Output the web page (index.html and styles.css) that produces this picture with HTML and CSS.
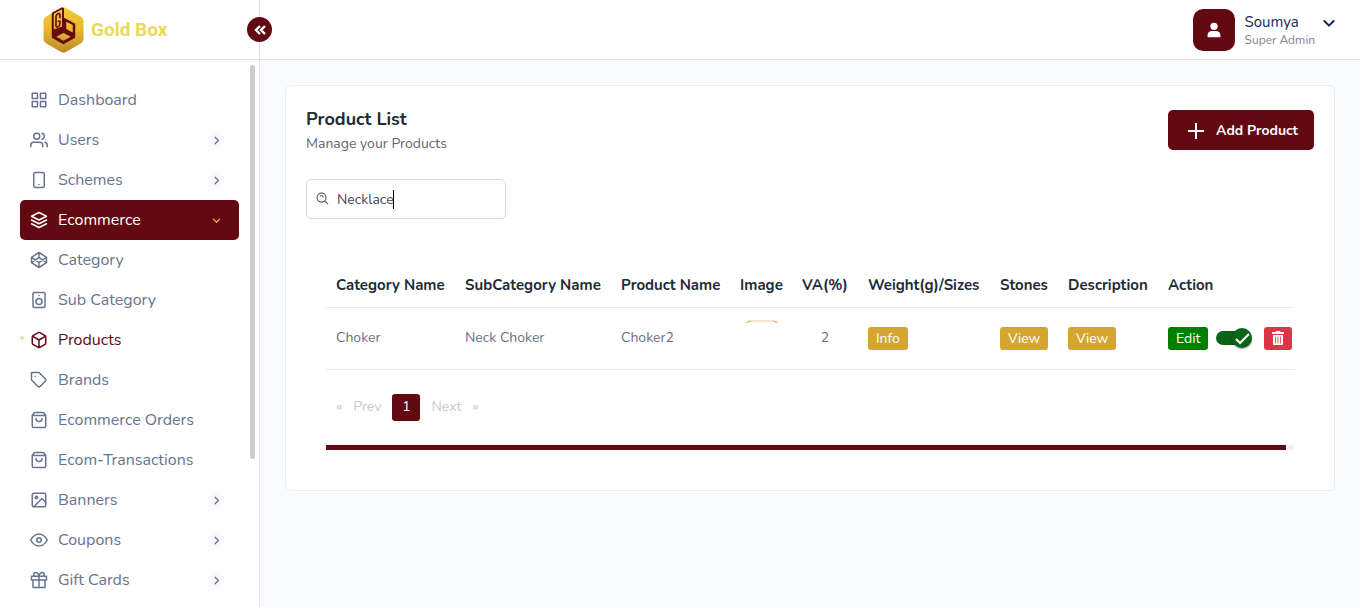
FILE: index.html
```html
<!DOCTYPE html>
<html lang="en">
<head>
<meta charset="utf-8">
<meta name="viewport" content="width=device-width, initial-scale=1">
<title>Gold Box - Product List</title>
<link rel="stylesheet" href="styles.css">
</head>
<body>
<svg class="sprite" aria-hidden="true">
  <symbol id="grid" viewBox="0 0 24 24"><path d="M3 3h7v7H3zM14 3h7v7h-7zM14 14h7v7h-7zM3 14h7v7H3z"/></symbol>
  <symbol id="users" viewBox="0 0 24 24"><path d="M17 21v-2a4 4 0 0 0-4-4H5a4 4 0 0 0-4 4v2M23 21v-2a4 4 0 0 0-3-3.87M16 3.13a4 4 0 0 1 0 7.75"/><circle cx="9" cy="7" r="4"/></symbol>
  <symbol id="phone" viewBox="0 0 24 24"><rect x="5" y="2" width="14" height="20" rx="2"/><path d="M12 18h.01"/></symbol>
  <symbol id="layers" viewBox="0 0 24 24"><path d="M12 2 2 7l10 5 10-5zM2 17l10 5 10-5M2 12l10 5 10-5"/></symbol>
  <symbol id="codepen" viewBox="0 0 24 24"><path d="m12 2 10 6.500v7L12 22 2 15.500v-7zM12 22v-6.500M22 8.500l-10 7-10-7M2 15.500l10-7 10 7M12 2v6.500"/></symbol>
  <symbol id="speaker" viewBox="0 0 24 24"><rect x="4" y="2" width="16" height="20" rx="2"/><circle cx="12" cy="14" r="4"/><path d="M12 6h.01"/></symbol>
  <symbol id="box" viewBox="0 0 24 24"><path d="M21 16V8a2 2 0 0 0-1-1.730l-7-4a2 2 0 0 0-2 0l-7 4A2 2 0 0 0 3 8v8a2 2 0 0 0 1 1.730l7 4a2 2 0 0 0 2 0l7-4A2 2 0 0 0 21 16zM3.270 6.960 12 12.010l8.730-5.050M12 22.080V12"/></symbol>
  <symbol id="tag" viewBox="0 0 24 24"><path d="m20.590 13.410-7.170 7.170a2 2 0 0 1-2.830 0L2 12V2h10l8.590 8.590a2 2 0 0 1 0 2.820zM7 7h.01"/></symbol>
  <symbol id="bag" viewBox="0 0 24 24"><path d="M6 2 3 6v14a2 2 0 0 0 2 2h14a2 2 0 0 0 2-2V6l-3-4zM3 6h18M16 10a4 4 0 0 1-8 0"/></symbol>
  <symbol id="image" viewBox="0 0 24 24"><rect x="3" y="3" width="18" height="18" rx="2"/><circle cx="8.500" cy="8.500" r="1.500"/><path d="m21 15-5-5L5 21"/></symbol>
  <symbol id="eye" viewBox="0 0 24 24"><path d="M1 12s4-8 11-8 11 8 11 8-4 8-11 8-11-8-11-8z"/><circle cx="12" cy="12" r="3"/></symbol>
  <symbol id="gift" viewBox="0 0 24 24"><path d="M20 12v10H4V12M2 7h20v5H2zM12 22V7M12 7H7.500a2.500 2.500 0 0 1 0-5C11 2 12 7 12 7zM12 7h4.500a2.500 2.500 0 0 0 0-5C13 2 12 7 12 7z"/></symbol>
  <symbol id="right" viewBox="0 0 24 24"><path d="m9 5 7 7-7 7"/></symbol>
  <symbol id="down" viewBox="0 0 24 24"><path d="m5 9 7 7 7-7"/></symbol>
</svg>

<header class="topbar">
  <div class="brand">
    <a class="brand-link" href="#">
      <svg class="brand-logo" viewBox="0 0 42 48" aria-hidden="true">
        <defs><linearGradient id="gold" x1="0" y1="0" x2="0" y2="1"><stop offset="0" stop-color="#f5c938"/><stop offset=".5" stop-color="#e9b62c"/><stop offset="1" stop-color="#b98a2c"/></linearGradient></defs>
        <path fill="url(#gold)" d="M18.500 1.500q2.500-1.500 5 0l15.500 9q2.500 1.500 2.500 4v19q0 2.500-2.500 4l-15.500 9q-2.500 1.500-5 0L3 37.500Q.5 36 .5 33.500v-19Q.5 12 3 10.500z"/>
        <path fill="#650a12" fill-rule="evenodd" d="M9 7l2-1v17.500l8.500-3V1l2 .5v10L33 17.500V32l-12 6.500L9 32zM21 27l-7.500 3.800L21 35l7.500-4.200zM23.800 15.500V23l6.700 3.500V19z"/>
        <path fill="none" stroke="#650a12" stroke-width="1.700" d="M17.300 12V8.500q0-2-2-1.200-2 .8-2 3.200v9q0 2 2 1.200 2-.8 2-3.200V15H15M9.500 7 20 1.500"/>
      </svg>
      <span>Gold Box</span>
    </a>
    <button class="collapse" type="button" aria-label="Collapse sidebar">
      <svg viewBox="0 0 14 14" aria-hidden="true"><path d="M7 3 3 7l4 4M12 3 8 7l4 4"/></svg>
    </button>
  </div>
  <button class="account" type="button">
    <span class="avatar"><svg viewBox="0 0 24 24" aria-hidden="true"><circle cx="12" cy="8" r="4"/><path d="M5 20v-2q0-5 5-5h4q5 0 5 5v2z"/></svg></span>
    <span class="who"><span class="name">Soumya</span><span class="role">Super Admin</span></span>
    <svg class="icon caret-down" aria-hidden="true"><use href="#down"/></svg>
  </button>
</header>

<div class="shell">
  <nav class="sidebar" aria-label="Main">
    <ul class="menu">
      <li><a class="item" href="#"><svg class="icon"><use href="#grid"/></svg>Dashboard</a></li>
      <li><a class="item" href="#"><svg class="icon"><use href="#users"/></svg>Users<span class="arrow"><svg class="icon"><use href="#right"/></svg></span></a></li>
      <li><a class="item" href="#"><svg class="icon"><use href="#phone"/></svg>Schemes<span class="arrow"><svg class="icon"><use href="#right"/></svg></span></a></li>
      <li><a class="item open" href="#"><svg class="icon"><use href="#layers"/></svg>Ecommerce<span class="arrow"><svg class="icon"><use href="#down"/></svg></span></a></li>
      <li><a class="item" href="#"><svg class="icon"><use href="#codepen"/></svg>Category</a></li>
      <li><a class="item" href="#"><svg class="icon"><use href="#speaker"/></svg>Sub Category</a></li>
      <li><a class="item current" href="#" aria-current="page"><svg class="icon"><use href="#box"/></svg>Products</a></li>
      <li><a class="item" href="#"><svg class="icon"><use href="#tag"/></svg>Brands</a></li>
      <li><a class="item" href="#"><svg class="icon"><use href="#bag"/></svg>Ecommerce Orders</a></li>
      <li><a class="item" href="#"><svg class="icon"><use href="#bag"/></svg>Ecom-Transactions</a></li>
      <li><a class="item" href="#"><svg class="icon"><use href="#image"/></svg>Banners<span class="arrow"><svg class="icon"><use href="#right"/></svg></span></a></li>
      <li><a class="item" href="#"><svg class="icon"><use href="#eye"/></svg>Coupons<span class="arrow"><svg class="icon"><use href="#right"/></svg></span></a></li>
      <li><a class="item" href="#"><svg class="icon"><use href="#gift"/></svg>Gift Cards<span class="arrow"><svg class="icon"><use href="#right"/></svg></span></a></li>
    </ul>
    <div class="side-scroll"></div>
  </nav>

  <main class="content">
    <section class="card">
      <div class="card-head">
        <div>
          <h1>Product List</h1>
          <p>Manage your Products</p>
        </div>
        <button class="add" type="button"><svg viewBox="0 0 16 16" aria-hidden="true"><path d="M8 0v16M0 8h16"/></svg>Add Product</button>
      </div>
      <div class="search">
        <svg viewBox="0 0 14 14" aria-hidden="true"><circle cx="6" cy="6" r="4.800"/><path d="m9.500 9.500 3.500 3.500M4.500 4.500Q7 2.800 7.800 5.800"/></svg>
        <input type="text" value="Necklace" aria-label="Search products">
        <span class="text-caret"></span>
      </div>
      <div class="listing">
        <table>
          <colgroup><col class="c-category"><col class="c-sub"><col class="c-product"><col class="c-image"><col class="c-va"><col class="c-weight"><col class="c-stones"><col class="c-desc"><col></colgroup>
          <thead><tr><th>Category Name</th><th>SubCategory Name</th><th>Product Name</th><th>Image</th><th>VA(%)</th><th>Weight(g)/Sizes</th><th>Stones</th><th>Description</th><th>Action</th></tr></thead>
          <tbody><tr>
            <td>Choker</td><td>Neck Choker</td><td>Choker2</td>
            <td><svg class="thumb" viewBox="0 0 32 36" role="img" aria-label="Choker2"><path d="M0 2.500Q3 1 7 1h18q4 0 7 1.500" fill="none" stroke="#f6dfbb" stroke-width="1.500"/><path d="M1 2.500 5 1M27 1l4 1.500" stroke="#e5a84a"/></svg></td>
            <td class="number">2</td>
            <td><button class="tag gold" type="button">Info</button></td>
            <td><button class="tag gold" type="button">View</button></td>
            <td><button class="tag gold" type="button">View</button></td>
            <td><div class="actions">
              <button class="tag green" type="button">Edit</button>
              <label class="switch"><input type="checkbox" checked aria-label="Product active"><svg viewBox="0 0 20 20" aria-hidden="true"><path d="m4 11 4 4 9-9"/></svg></label>
              <button class="tag red" type="button" aria-label="Delete"><svg viewBox="0 0 12 14" aria-hidden="true"><path fill="#fff" fill-rule="evenodd" d="M4 0h4l.5 1H12v2H0V1h3.500zM1 4h10v9q0 1-1 1H2q-1 0-1-1zM3 5.500v7h.8v-7zM5.600 5.500v7h.8v-7zM8.200 5.500v7H9v-7z"/></svg></button>
            </div></td>
          </tr></tbody>
        </table>
        <div class="pager">
          <button type="button" disabled>«</button><button type="button" disabled>Prev</button><button class="page" type="button" aria-current="page">1</button><button type="button" disabled>Next</button><button type="button" disabled>»</button>
        </div>
        <div class="table-scroll"><div class="table-thumb"></div></div>
      </div>
    </section>
  </main>
</div>
</body>
</html>
```

FILE: styles.css
```css
:root {
  --wine: #620912;
  --slate: #67748e;
  --line: #e8ebed;
}
* { box-sizing: border-box; }
body {
  margin: 0;
  min-height: 100vh;
  display: flex;
  flex-direction: column;
  background: #fafbfe;
  color: #212b36;
  font: 14px/20px Nunito, Lato, sans-serif;
}
button, input { font: inherit; }
button { border: 0; padding: 0; cursor: pointer; }
a { text-decoration: none; }
.sprite { display: none; }
.icon {
  width: 18px;
  height: 18px;
  flex: none;
  fill: none;
  stroke: currentColor;
  stroke-width: 2;
  stroke-linecap: round;
  stroke-linejoin: round;
}

.topbar {
  height: 60px;
  display: flex;
  justify-content: space-between;
  background: #fff;
  border-bottom: 1px solid #e0e1e6;
}
.brand {
  position: relative;
  width: 260px;
  display: flex;
  align-items: center;
  padding-left: 43px;
  border-right: 1px solid #e0e1e6;
}
.brand-link {
  display: flex;
  align-items: center;
  gap: 7px;
  color: #ead957;
  font: 700 19px/24px Roboto, sans-serif;
}
.brand-logo { width: 41px; height: 48px; }
.collapse {
  position: absolute;
  right: -13px;
  top: 17px;
  width: 25px;
  height: 25px;
  display: grid;
  place-items: center;
  border-radius: 50%;
  background: var(--wine);
}
.collapse svg {
  width: 14px;
  height: 14px;
  fill: none;
  stroke: #fff;
  stroke-width: 2.4;
}
.account {
  display: flex;
  align-items: center;
  padding: 0 23px;
  background: none;
  text-align: left;
}
.avatar {
  width: 42px;
  height: 42px;
  display: grid;
  place-items: center;
  margin-right: 10px;
  border-radius: 10px;
  background: var(--wine);
}
.avatar svg { width: 22px; height: 22px; fill: #fff; }
.who { display: grid; margin-right: 6px; }
.name { color: #1b2950; font-size: 15px; line-height: 20px; }
.role { color: #7b858f; font-size: 12px; line-height: 16px; }
.caret-down { color: #1b2950; width: 16px; height: 16px; stroke-width: 3; margin-bottom: 14px; }

.shell { flex: 1; display: flex; }
.sidebar {
  position: relative;
  width: 260px;
  flex: none;
  padding: 20px 20px 0;
  background: #fff;
  border-right: 1px solid var(--line);
}
.menu { list-style: none; margin: 0; padding: 0; }
.item {
  position: relative;
  height: 40px;
  display: flex;
  align-items: center;
  gap: 10px;
  padding: 0 10px;
  border-radius: 5px;
  color: var(--slate);
  font-size: 16px;
}
.item.open { background: var(--wine); color: #fff; }
.item.current { color: var(--wine); }
.item.current::before {
  content: "";
  position: absolute;
  left: 0;
  top: 16px;
  width: 4px;
  height: 4px;
  border-radius: 50%;
  background: #ffd5ad;
}
.arrow {
  width: 16px;
  height: 16px;
  display: grid;
  place-items: center;
  margin: 0 5px 0 auto;
  border-radius: 50%;
  background: #f7f8fa;
}
.arrow .icon { width: 11px; height: 11px; stroke-width: 3; }
.open .arrow { background: none; color: #ff9f43; }
.side-scroll {
  position: absolute;
  right: 4px;
  top: 5px;
  width: 5px;
  height: 394px;
  border-radius: 3px;
  background: #ccc;
}

.content { flex: 1; min-width: 0; padding: 25px; }
.card {
  padding: 24px 20px 40px;
  background: #fff;
  border: 1px solid var(--line);
  border-radius: 6px;
}
.card-head { display: flex; justify-content: space-between; align-items: flex-start; }
h1 { margin: 0; font-size: 18px; line-height: 18px; font-weight: 700; }
h1 + p { margin: 6px 0 0; color: #5f6670; }
.add {
  height: 40px;
  display: flex;
  align-items: center;
  gap: 12px;
  padding: 1px 16px 0 20px;
  border-radius: 5px;
  background: var(--wine);
  color: #fff;
  font-weight: 700;
}
.add svg { width: 16px; height: 16px; stroke: #fff; stroke-width: 2; }
.search {
  position: relative;
  width: 200px;
  margin-top: 25px;
}
.search svg {
  position: absolute;
  left: 10px;
  top: 13px;
  width: 13px;
  height: 13px;
  fill: none;
  stroke: #5b6670;
  stroke-width: 1.3;
}
.search input {
  width: 100%;
  height: 40px;
  padding: 0 10px 0 30px;
  border: 1px solid #d9dce0;
  border-radius: 5px;
  background: transparent;
  color: #3f4650;
}
.text-caret {
  position: absolute;
  left: 87px;
  top: 11px;
  width: 1px;
  height: 19px;
  background: #000;
}

.listing { margin: 44px 20px 0; overflow: hidden; }
table { width: 100%; table-layout: fixed; border-collapse: collapse; }
.c-category { width: 129px; }
.c-sub { width: 156px; }
.c-product { width: 119px; }
.c-image { width: 62px; }
.c-va { width: 66px; }
.c-weight { width: 132px; }
.c-stones { width: 68px; }
.c-desc { width: 100px; }
th {
  height: 44px;
  padding: 0 0 0 10px;
  border-bottom: 1px solid var(--line);
  font-size: 15px;
  font-weight: 700;
  text-align: left;
  white-space: nowrap;
}
td {
  height: 62px;
  padding: 0 0 0 10px;
  border-bottom: 1px solid var(--line);
  color: #637381;
}
.number { padding-right: 10px; text-align: center; }
.thumb { display: block; width: 32px; height: 36px; margin-left: 6px; }
.tag {
  height: 23px;
  padding: 0 8px;
  border-radius: 3px;
  color: #fff;
  line-height: 23px;
}
.gold { background: #d5a532; }
.green { background: #008000; }
.red { width: 28px; background: #dc3545; }
.red svg { display: block; width: 12px; height: 14px; }
.actions { display: flex; align-items: center; }
.switch {
  position: relative;
  width: 36px;
  height: 20px;
  margin: 0 12px 0 8px;
}
.switch input {
  appearance: none;
  width: 34px;
  height: 14px;
  margin: 3px 0;
  display: block;
  border-radius: 7px;
  background: #0b6317;
}
.switch svg {
  position: absolute;
  right: 0;
  top: 0;
  width: 20px;
  height: 20px;
  border-radius: 50%;
  background: #0b6317;
  box-shadow: 0 1px 2px #0006;
  fill: none;
  stroke: #fff;
  stroke-width: 2;
}
.pager { display: flex; align-items: center; gap: 11px; padding: 24px 10px; }
.pager button { height: 27px; background: none; color: #c8c9cc; }
.pager .page {
  width: 28px;
  border-radius: 3px;
  background: var(--wine);
  color: #fff;
}
.table-scroll { height: 5px; padding-right: 8px; background: #f1f1f1; }
.table-thumb { height: 5px; background: var(--wine); }
```
